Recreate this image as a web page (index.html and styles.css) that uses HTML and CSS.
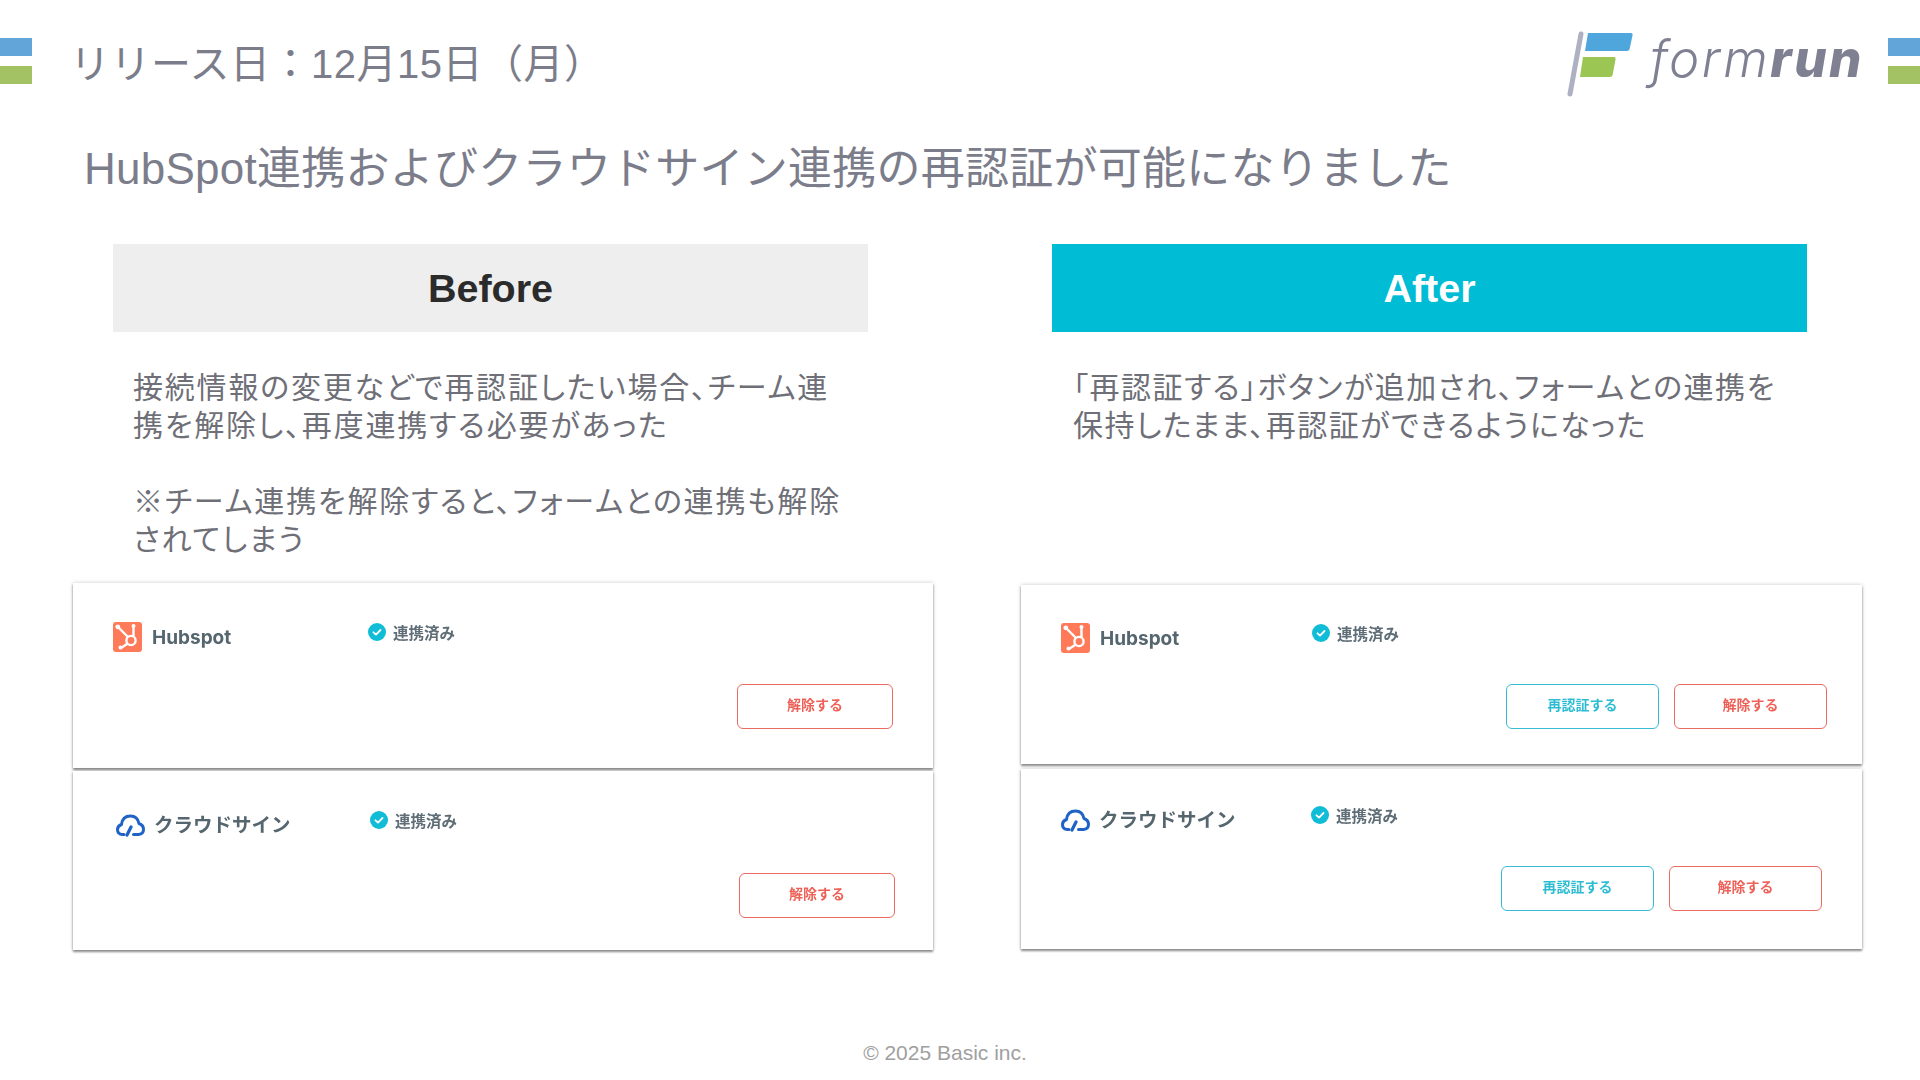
FILE: index.html
```html
<!DOCTYPE html>
<html lang="ja">
<head>
  <meta charset="utf-8">
  <title>リリース日:12月15日(月)</title>
  <link rel="stylesheet" href="styles.css">
</head>
<body>
  <div class="slide">
    <header class="slide-header">
      <div class="edge-mark"><span class="edge-blue"></span><span class="edge-green"></span></div>
      <h1 class="release-date">リリース日：12月15日（月）</h1>
      <div class="logo">
        <svg class="logo-flag" viewBox="0 0 75 68" width="75" height="68">
          <line x1="19" y1="4" x2="8" y2="64" stroke="#aeb1c2" stroke-width="5" stroke-linecap="round"/>
          <path d="M26 3h43q2 0 1.600 2l-3 14q-.4 2-2.600 2H23z" fill="#4ea6dc"/>
          <path d="M21 27h31q2 0 1.600 2l-3 16q-.4 2-2.600 2H18z" fill="#9bc653"/>
        </svg>
        <span class="logo-text">form<b>run</b></span>
      </div>
      <div class="edge-mark edge-right"><span class="edge-blue"></span><span class="edge-green"></span></div>
    </header>

    <h2 class="headline">HubSpot連携およびクラウドサイン連携の再認証が可能になりました</h2>

    <div class="columns">
      <section class="column column-before">
        <div class="column-title title-before">Before</div>
        <p class="note">接続情報の変更などで再認証したい場合、チーム連<br>携を解除し、再度連携する必要があった<br><br>※チーム連携を解除すると、フォームとの連携も解除<br>されてしまう</p>

        <div class="card card-before-hubspot">
          <div class="card-head">
            <div class="brand">
              <svg class="brand-icon" viewBox="0 0 29 30" width="29" height="30">
                <rect width="29" height="30" rx="3" fill="#ff7a59"/>
                <g stroke="#fff" fill="none" stroke-width="2.400" stroke-linecap="round">
                  <circle cx="18" cy="18.500" r="4.600"/>
                  <path d="M6 6l8.500 8.500M20.500 4.500v9M14 22l-6 4"/>
                </g>
                <circle cx="4.800" cy="4.800" r="2.400" fill="#fff"/>
                <circle cx="20.500" cy="4" r="2" fill="#fff"/>
                <circle cx="7.500" cy="25.500" r="2" fill="#fff"/>
              </svg>
              <span class="brand-name">Hubspot</span>
            </div>
            <div class="status">
              <svg class="status-icon" viewBox="0 0 18 18" width="18" height="18"><circle cx="9" cy="9" r="9" fill="#10bcd6"/><path d="M5.500 9.300l2.500 2.300 4.500-4.600" stroke="#fff" stroke-width="1.800" fill="none" stroke-linecap="round" stroke-linejoin="round"/></svg>
              <span>連携済み</span>
            </div>
          </div>
          <div class="card-actions">
            <button class="btn btn-danger">解除する</button>
          </div>
        </div>

        <div class="card card-before-cloud">
          <div class="card-head">
            <div class="brand">
              <svg class="brand-icon" viewBox="0 0 29 24" width="29" height="24">
                <path d="M8 21.500H6q-4.500-.5-4.500-5 0-3.500 4-5 1-8.500 9-8.500 7 0 8.500 7.500 4.500 1.500 4.500 6 0 4.500-5 5h-5" stroke="#1f63c6" stroke-width="3" fill="none" stroke-linecap="round" stroke-linejoin="round"/>
                <path d="M11 22l4-8" stroke="#1f63c6" stroke-width="3.200" stroke-linecap="round"/>
              </svg>
              <span class="brand-name brand-name-ja">クラウドサイン</span>
            </div>
            <div class="status">
              <svg class="status-icon" viewBox="0 0 18 18" width="18" height="18"><circle cx="9" cy="9" r="9" fill="#10bcd6"/><path d="M5.500 9.300l2.500 2.300 4.500-4.600" stroke="#fff" stroke-width="1.800" fill="none" stroke-linecap="round" stroke-linejoin="round"/></svg>
              <span>連携済み</span>
            </div>
          </div>
          <div class="card-actions">
            <button class="btn btn-danger">解除する</button>
          </div>
        </div>
      </section>

      <section class="column column-after">
        <div class="column-title title-after">After</div>
        <p class="note">「再認証する」ボタンが追加され、フォームとの連携を<br>保持したまま、再認証ができるようになった</p>

        <div class="card card-after-hubspot">
          <div class="card-head">
            <div class="brand">
              <svg class="brand-icon" viewBox="0 0 29 30" width="29" height="30">
                <rect width="29" height="30" rx="3" fill="#ff7a59"/>
                <g stroke="#fff" fill="none" stroke-width="2.400" stroke-linecap="round">
                  <circle cx="18" cy="18.500" r="4.600"/>
                  <path d="M6 6l8.500 8.500M20.500 4.500v9M14 22l-6 4"/>
                </g>
                <circle cx="4.800" cy="4.800" r="2.400" fill="#fff"/>
                <circle cx="20.500" cy="4" r="2" fill="#fff"/>
                <circle cx="7.500" cy="25.500" r="2" fill="#fff"/>
              </svg>
              <span class="brand-name">Hubspot</span>
            </div>
            <div class="status">
              <svg class="status-icon" viewBox="0 0 18 18" width="18" height="18"><circle cx="9" cy="9" r="9" fill="#10bcd6"/><path d="M5.500 9.300l2.500 2.300 4.500-4.600" stroke="#fff" stroke-width="1.800" fill="none" stroke-linecap="round" stroke-linejoin="round"/></svg>
              <span>連携済み</span>
            </div>
          </div>
          <div class="card-actions">
            <button class="btn btn-info">再認証する</button>
            <button class="btn btn-danger">解除する</button>
          </div>
        </div>

        <div class="card card-after-cloud">
          <div class="card-head">
            <div class="brand">
              <svg class="brand-icon" viewBox="0 0 29 24" width="29" height="24">
                <path d="M8 21.500H6q-4.500-.5-4.500-5 0-3.500 4-5 1-8.500 9-8.500 7 0 8.500 7.500 4.500 1.500 4.500 6 0 4.500-5 5h-5" stroke="#1f63c6" stroke-width="3" fill="none" stroke-linecap="round" stroke-linejoin="round"/>
                <path d="M11 22l4-8" stroke="#1f63c6" stroke-width="3.200" stroke-linecap="round"/>
              </svg>
              <span class="brand-name brand-name-ja">クラウドサイン</span>
            </div>
            <div class="status">
              <svg class="status-icon" viewBox="0 0 18 18" width="18" height="18"><circle cx="9" cy="9" r="9" fill="#10bcd6"/><path d="M5.500 9.300l2.500 2.300 4.500-4.600" stroke="#fff" stroke-width="1.800" fill="none" stroke-linecap="round" stroke-linejoin="round"/></svg>
              <span>連携済み</span>
            </div>
          </div>
          <div class="card-actions">
            <button class="btn btn-info">再認証する</button>
            <button class="btn btn-danger">解除する</button>
          </div>
        </div>
      </section>
    </div>

    <footer class="copyright">© 2025 Basic inc.</footer>
  </div>
</body>
</html>
```

FILE: styles.css
```css
body {
  margin: 0;
  background-color: #fff;
  font-family: "Liberation Sans", "Noto Sans CJK JP", sans-serif;
}

.slide {
  width: 1920px;
  height: 1080px;
  overflow: hidden;
  display: flex;
  flex-direction: column;
  background-color: #fff;
}

/* header */
.slide-header {
  display: flex;
  align-items: flex-start;
  height: 62px;
  padding-top: 31px;
}

.edge-mark {
  width: 32px;
  margin-top: 7px;
  flex-shrink: 0;
}

.edge-right {
  margin-left: 24px;
}

.edge-blue,
.edge-green {
  display: block;
  height: 18px;
}

.edge-blue {
  background-color: #62a5d8;
  margin-bottom: 10px;
}

.edge-green {
  background-color: #a3c263;
}

.release-date {
  margin: 2px 0 0 38px;
  font-size: 40px;
  line-height: 62px;
  font-weight: 400;
  letter-spacing: 0.5px;
  color: #7c7d8b;
}

.logo {
  margin-left: auto;
  display: flex;
  align-items: flex-start;
}

.logo-flag {
  display: block;
  margin-top: -1px;
}

.logo-text {
  margin-left: 13px;
  font-family: Inter, sans-serif;
  font-style: italic;
  font-weight: 300;
  font-size: 51px;
  line-height: 56px;
  color: #7f8192;
  letter-spacing: 2.500px;
}

.logo-text b {
  font-weight: 800;
}

.headline {
  margin: 43px 0 0 84px;
  font-size: 44px;
  line-height: 66px;
  font-weight: 400;
  letter-spacing: 0.250px;
  color: #7c7d8b;
}

/* before / after columns */
.columns {
  display: grid;
  grid-template-columns: 860px 841px;
  column-gap: 88px;
  margin: 42px 0 0 73px;
}

.column-title {
  height: 88px;
  line-height: 88px;
  text-align: center;
  font-size: 39.500px;
  font-weight: 700;
}

.title-before {
  margin-left: 40px;
  width: 755px;
  background-color: #eee;
  color: #2b2b2b;
}

.title-after {
  margin-left: 31px;
  width: 755px;
  background-color: #00bcd4;
  color: #fff;
}

.note {
  margin: 0;
  padding-top: 37px;
  font-size: 30px;
  line-height: 38px;
  letter-spacing: 1.800px;
  color: #6f6f78;
  font-feature-settings: "palt";
  box-sizing: border-box;
}

.column-before .note {
  height: 251px;
  padding-left: 60px;
}

.column-after .note {
  height: 253px;
  padding-left: 52px;
  letter-spacing: 1.500px;
}

/* integration cards */
.card {
  display: flex;
  flex-direction: column;
  justify-content: space-between;
  box-sizing: border-box;
  background-color: #fff;
  box-shadow: 0 2px 2px rgba(0, 0, 0, 0.4), 0 0 4px rgba(0, 0, 0, 0.22);
}

.card-before-hubspot {
  height: 185px;
  padding: 39px 40px 39px 40px;
}

.card-before-cloud {
  height: 179px;
  margin-top: 3px;
  padding: 39px 38px 32px 43px;
}

.card-after-hubspot {
  height: 179px;
  padding: 38px 35px 35px 40px;
}

.card-after-cloud {
  height: 180px;
  margin-top: 5px;
  padding: 36px 40px 38px 40px;
}

.card-head {
  display: flex;
  align-items: center;
  height: 30px;
  filter: blur(0.4px);
}

.brand {
  display: flex;
  align-items: center;
  gap: 10px;
  width: 255px;
  flex-shrink: 0;
}

.card-before-cloud .brand {
  width: 254px;
}

.card-after-hubspot .brand {
  width: 251px;
}

.card-after-cloud .brand {
  width: 250px;
}

.brand-icon {
  display: block;
  flex-shrink: 0;
}

.brand-name {
  font-family: Inter, "Noto Sans CJK JP", sans-serif;
  font-size: 19px;
  font-weight: 700;
  color: #56666f;
}

.brand-name-ja {
  margin: -3px 0 0 -1px;
  font-size: 19.500px;
}

.status {
  display: flex;
  align-items: center;
  gap: 7px;
  margin-bottom: 11px;
  font-size: 15.500px;
  font-weight: 700;
  color: #5f6e76;
}

.status-icon {
  display: block;
}

.card-actions {
  display: flex;
  justify-content: flex-end;
  gap: 15px;
  filter: blur(0.3px);
}

.btn {
  width: 153px;
  height: 45px;
  padding: 0 0 5px;
  background-color: #fff;
  border-radius: 6px;
  font-family: "Noto Sans CJK JP", sans-serif;
  font-size: 14px;
  font-weight: 700;
}

.column-before .btn {
  width: 156px;
}

.btn-danger {
  border: 1.500px solid #ea6a60;
  color: #ee6158;
}

.btn-info {
  border: 1.500px solid #38bcd6;
  color: #2dbcd2;
}

.copyright {
  margin-top: auto;
  padding: 0 30px 15px 0;
  text-align: center;
  font-size: 21px;
  line-height: 24px;
  color: #a0a0a0;
}
```
